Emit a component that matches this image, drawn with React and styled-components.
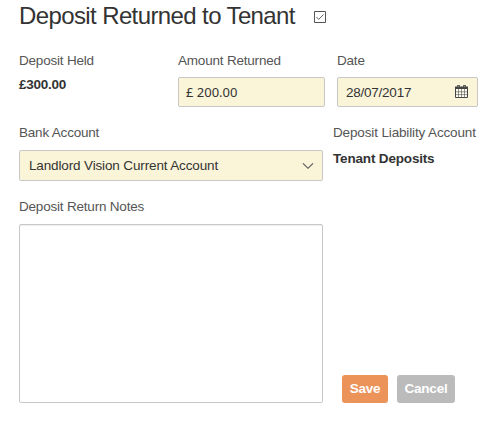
import React, { useState } from "react";
import styled, { createGlobalStyle } from "styled-components";

const GlobalStyle = createGlobalStyle`
  * {
    box-sizing: border-box;
  }

  body {
    margin: 0;
    background: #fff;
    color: #333;
    font-family: "Liberation Sans", Arial, sans-serif;
    font-size: 13.5px;
    line-height: 16px;
    letter-spacing: -0.14px;
  }
`;

const Form = styled.form`
  height: 422px;
  padding: 0 0 0 19px;
  overflow: hidden;
`;

const Header = styled.div`
  display: flex;
  align-items: center;
  gap: 19px;
  height: 32px;
`;

const Title = styled.h1`
  width: 276px;
  margin: 0;
  font-size: 24px;
  font-weight: 400;
  line-height: 32px;
  white-space: nowrap;
  letter-spacing: -0.61px;
`;

const CheckIcon = styled.svg`
  width: 12px;
  height: 12px;
  margin-top: 2px;
`;

const Row = styled.div`
  display: grid;
  grid-template-columns: ${({ $columns }) => $columns};
  column-gap: ${({ $gap }) => $gap};
  padding-top: ${({ $top }) => $top};
`;

const Field = styled.div`
  display: flex;
  flex-direction: column;
  min-width: 0;
`;

const Label = styled.label`
  color: #555;
  white-space: nowrap;
  letter-spacing: ${({ $spacing }) => $spacing || "-0.2px"};
`;

const Value = styled.strong`
  margin-top: ${({ $top }) => $top};
  letter-spacing: ${({ $spacing }) => $spacing || "-0.17px"};
  white-space: nowrap;
`;

const Control = styled.div`
  display: flex;
  align-items: center;
  justify-content: space-between;
  height: ${({ $height }) => $height || "30px"};
  margin-top: ${({ $top }) => $top || "9px"};
  padding: ${({ $padding }) => $padding};
  background: #faf5d9;
  border: 1px solid #c8c8c8;
  border-radius: 2px;
`;

const Amount = styled.span`
  font-family: "Noto Sans", sans-serif;
  font-size: 13px;
  letter-spacing: 0;
  white-space: pre;
`;

const DateText = styled.span`
  padding-top: 2px;
  letter-spacing: -0.24px;
`;

const Notes = styled.textarea`
  display: block;
  width: 304px;
  height: 179px;
  margin-top: 9px;
  padding: 8px;
  border: 1px solid #c8c8c8;
  border-radius: 2px;
  box-shadow: inset 0 1px 1px rgba(0, 0, 0, 0.07);
  font: inherit;
  outline: none;
  resize: none;
`;

const Actions = styled.div`
  display: flex;
  align-items: flex-end;
  gap: 9px;
  padding-left: 9px;
`;

const Button = styled.button`
  width: ${({ $width }) => $width};
  height: 28px;
  padding: 0 0 1px;
  border: none;
  border-radius: 3px;
  background: ${({ $primary }) => ($primary ? "#ec935a" : "#bbb")};
  color: #fff;
  font: bold 13.5px "Liberation Sans", Arial, sans-serif;
  letter-spacing: -0.2px;
  cursor: pointer;
`;

const CalendarIcon = styled.svg`
  width: 13px;
  height: 13px;
  margin-bottom: 2px;
`;

const Calendar = () => (
  <CalendarIcon viewBox="0 0 13 13">
    <path d="M0.5 2.5h12v10h-12z" fill="#fffdf0" stroke="#444" />
    <path d="M0 1.5h13V4H0z" fill="#444" />
    <path
      d="M3.5 4v8.5M6.5 4v8.5M9.5 4v8.5M1 6.8h11M1 9.6h11"
      stroke="#666"
      strokeWidth="0.7"
    />
    <path
      d="M2.5 0.5h2v2h-2zM8.5 0.5h2v2h-2z"
      fill="#999"
      stroke="#444"
      strokeWidth="0.9"
    />
  </CalendarIcon>
);

const Chevron = () => (
  <svg width="12" height="8" viewBox="0 0 12 8">
    <path d="M1 1.3l5 5 5-5" fill="none" stroke="#555" strokeWidth="1.1" />
  </svg>
);

const App = () => {
  const [notes, setNotes] = useState("");

  return (
    <>
      <GlobalStyle />
      <Form onSubmit={(e) => e.preventDefault()}>
        <Header>
          <Title>Deposit Returned to Tenant</Title>
          <CheckIcon viewBox="0 0 12 12">
            <path d="M.5.5h11v11H.5z" fill="#fff" stroke="#555" />
            <path d="M2.5 6l2.2 2.4L9.5 3.5" fill="none" stroke="#666" />
          </CheckIcon>
        </Header>

        <Row $columns="147px 147px 141px" $gap="12px" $top="21px">
          <Field>
            <Label>Deposit Held</Label>
            <Value $top="8px" $spacing="-0.24px">
              £300.00
            </Value>
          </Field>
          <Field>
            <Label>Amount Returned</Label>
            <Control $padding="0 6px 0 7px" $top="8px">
              <Amount>£ 200.00</Amount>
            </Control>
          </Field>
          <Field>
            <Label>Date</Label>
            <Control $padding="0 9px 0 8px" $top="8px">
              <DateText>28/07/2017</DateText>
              <Calendar />
            </Control>
          </Field>
        </Row>

        <Row $columns="304px 146px" $gap="10px" $top="18px">
          <Field>
            <Label>Bank Account</Label>
            <Control $padding="0 8px 0 9px" $height="31px">
              <span>Landlord Vision Current Account</span>
              <Chevron />
            </Control>
          </Field>
          <Field>
            <Label $spacing="-0.14px">Deposit Liability Account</Label>
            <Value $top="10px">Tenant Deposits</Value>
          </Field>
        </Row>

        <Row $columns="304px 146px" $gap="10px" $top="18px">
          <Field>
            <Label htmlFor="notes">Deposit Return Notes</Label>
            <Notes
              id="notes"
              value={notes}
              onChange={(e) => setNotes(e.target.value)}
            />
          </Field>
          <Actions>
            <Button type="submit" $primary $width="46px">
              Save
            </Button>
            <Button type="button" $width="58px">
              Cancel
            </Button>
          </Actions>
        </Row>
      </Form>
    </>
  );
};

export default App;
